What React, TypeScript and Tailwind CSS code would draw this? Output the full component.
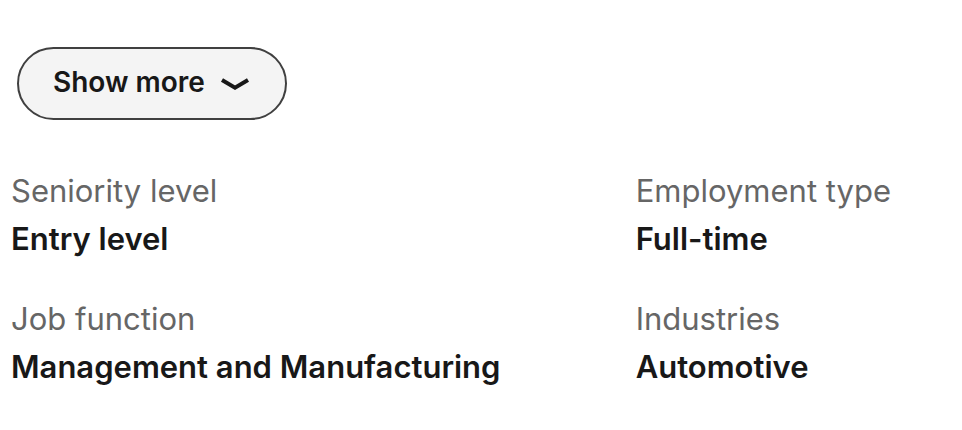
const criteria = [
  { label: "Seniority level", value: "Entry level" },
  { label: "Employment type", value: "Full-time" },
  { label: "Job function", value: "Management and Manufacturing" },
  { label: "Industries", value: "Automotive" },
];

export default function App() {
  return (
    <main className="bg-white pt-[47px] pr-3.5 pb-10 pl-[11px] font-['Inter',sans-serif]">
      <button
        type="button"
        className="ml-1.5 flex h-[73px] items-center gap-3.5 rounded-full border-2 border-[#404040] bg-[#f4f4f4] px-[34px] text-[28px] leading-9 font-semibold text-[#181818]"
      >
        <span className="pb-1">Show more</span>
        <svg className="h-4 w-8" viewBox="0 0 32 16" fill="none" aria-hidden="true">
          <path d="M3 4 L16 11.7 L29 4" stroke="currentColor" strokeWidth="4" />
        </svg>
      </button>
      <dl className="mt-[47px] grid grid-cols-[2fr_1fr] gap-y-8">
        {criteria.map(({ label, value }) => (
          <div key={label}>
            <dt className="text-[31px] leading-12 text-[#666666]">{label}</dt>
            <dd className="text-[31px] leading-12 font-semibold text-[#181818]">{value}</dd>
          </div>
        ))}
      </dl>
    </main>
  );
}
